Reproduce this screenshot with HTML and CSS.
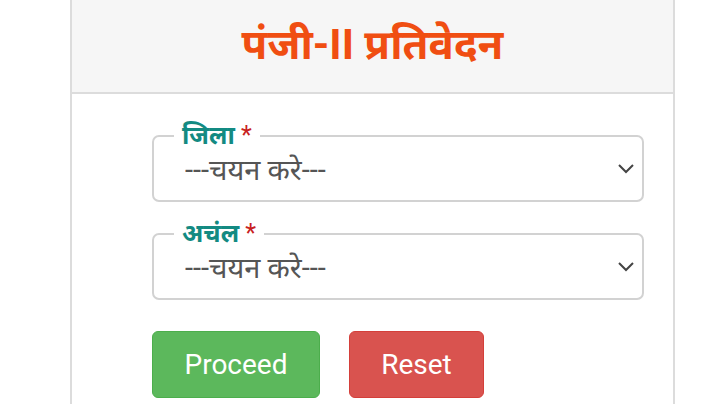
FILE: index.html
```html
<!DOCTYPE html>
<html lang="hi">
<head>
    <meta charset="UTF-8">
    <meta name="viewport" content="width=device-width, initial-scale=1.0">
    <title>पंजी-II प्रतिवेदन</title>
    <link rel="stylesheet" href="styles.css">
</head>
<body>
    <div class="report-card">
        <div class="report-header">
            <h1>पंजी-II प्रतिवेदन</h1>
        </div>

        <form class="report-form">
            <fieldset class="field">
                <legend>जिला <span class="req">*</span></legend>
                <select id="district">
                    <option>---चयन करे---</option>
                </select>
                <svg class="chevron" width="18" height="12" viewBox="0 0 18 12">
                    <path d="M2 3 L9 10 L16 3" fill="none" stroke="#444" stroke-width="2"/>
                </svg>
            </fieldset>

            <fieldset class="field">
                <legend>अचंल <span class="req">*</span></legend>
                <select id="anchal">
                    <option>---चयन करे---</option>
                </select>
                <svg class="chevron" width="18" height="12" viewBox="0 0 18 12">
                    <path d="M2 3 L9 10 L16 3" fill="none" stroke="#444" stroke-width="2"/>
                </svg>
            </fieldset>

            <div class="actions">
                <button type="button" class="btn btn-proceed">Proceed</button>
                <button type="reset" class="btn btn-reset">Reset</button>
            </div>
        </form>
    </div>
</body>
</html>
```

FILE: styles.css
```css
body {
    margin: 0;
    background-color: #ffffff;
    font-family: Roboto, "Noto Sans", sans-serif;
}

.report-card {
    width: 605px;
    margin-left: 70px;
    height: 404px;
    border-left: 2px solid #dcdcdc;
    border-right: 2px solid #dcdcdc;
    box-sizing: border-box;
    overflow: hidden;
}

.report-header {
    background: #f6f6f6;
    height: 92px;
    border-bottom: 2px solid #dcdcdc;
    display: flex;
    justify-content: center;
    align-items: center;
}

.report-header h1 {
    margin: 0;
    padding-bottom: 8px;
    font-size: 42px;
    font-weight: bold;
    color: #f04e12;
}

.report-form {
    padding: 29px 0 0 80px;
    width: 492px;
}

.field {
    position: relative;
    margin: 0 0 19px 0;
    padding: 0 0 9px 0;
    border: 2px solid #d2d2d2;
    border-radius: 7px;
}

.field legend {
    margin-left: 20px;
    padding: 0 8px;
    font-size: 25px;
    font-weight: bold;
    color: #138a82;
    line-height: 26px;
}

.req {
    color: #c82020;
    font-weight: normal;
}

.field select {
    appearance: none;
    -webkit-appearance: none;
    display: block;
    border: none;
    background: transparent;
    width: 100%;
    height: 42px;
    margin: 0;
    padding: 0 0 0 31px;
    font-size: 29px;
    color: #555;
    font-family: inherit;
}

.chevron {
    position: absolute;
    right: 7px;
    top: 13px;
    pointer-events: none;
}

.actions {
    display: flex;
    gap: 29px;
    margin-top: 31px;
}

.btn {
    height: 67px;
    border: 1px solid transparent;
    border-radius: 6px;
    color: #fff;
    font-size: 28px;
    font-family: Roboto, sans-serif;
    padding: 0;
}

.btn-proceed {
    width: 168px;
    background: #5cb85c;
    border-color: #4cae4c;
}

.btn-reset {
    width: 135px;
    background: #d9534f;
    border-color: #d43f3a;
}
```
